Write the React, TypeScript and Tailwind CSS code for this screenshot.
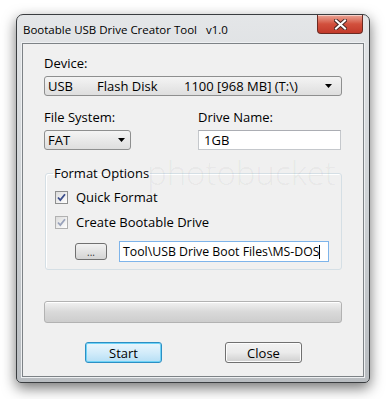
import { useState } from "react"

const font = { fontFamily: '"Open Sans", "Noto Sans", Arial, sans-serif' }

const Arrow = () => (
  <svg width="7" height="4" viewBox="0 0 7 4" className="shrink-0">
    <path d="M0 0h7L3.5 4z" fill="#000" />
  </svg>
)

const Check = ({ checked, disabled }: { checked: boolean; disabled?: boolean }) => (
  <span
    className={
      "flex h-[13px] w-[13px] shrink-0 items-center justify-center border bg-gradient-to-br from-[#dcdcdc] to-white " +
      (disabled ? "border-[#b1b1b1]" : "border-[#8e8f8f]")
    }
  >
    {checked && (
      <svg width="9" height="9" viewBox="0 0 9 9">
        <path
          d="M1 4.5l2.3 2.6L8 1.2"
          fill="none"
          stroke={disabled ? "#9aa3bb" : "#3c4e8c"}
          strokeWidth="1.8"
        />
      </svg>
    )}
  </span>
)

const App = () => {
  const [quick, setQuick] = useState(true)
  const [boot, setBoot] = useState(true)

  return (
    <div className="h-[399px] w-[387px] overflow-hidden bg-white pl-4 pt-[14px]" style={font}>
      <div className="relative flex h-[369px] w-[354px] flex-col rounded-t-[7px] rounded-b-[5px] border border-[#3a3d40] bg-gradient-to-b from-[#e4e6e8] via-[#cfd3d6] to-[#b9bdc1] shadow-[0_5px_14px_rgba(0,0,0,0.55)]">
        {/* title bar */}
        <div className="flex h-[28px] shrink-0 items-start justify-between pl-[6px]">
          <span className="mt-[7px] whitespace-pre text-[11.5px] leading-[16px] text-black">
            Bootable USB Drive Creator Tool   v1.0
          </span>
          <div className="mr-[6px] flex h-[19px] w-[46px] items-center justify-center rounded-b-[4px] border border-t-0 border-[#6b2a22] bg-gradient-to-b from-[#e9a496] via-[#d2503d] to-[#c2392a] shadow-[inset_0_1px_0_rgba(255,255,255,0.5)]">
            <svg width="13" height="11" viewBox="0 0 13 11">
              <path
                d="M2 1.5l9 8M11 1.5l-9 8"
                stroke="#4a2a26"
                strokeWidth="4"
                strokeLinecap="square"
              />
              <path
                d="M2 1.5l9 8M11 1.5l-9 8"
                stroke="#fff"
                strokeWidth="2"
                strokeLinecap="square"
              />
            </svg>
          </div>
        </div>

        {/* client */}
        <div className="mx-[5px] flex h-[334px] flex-col border border-[#7d8286] bg-[#f0f0f0] pl-[21px] pr-[21px] text-[13px] leading-[16px] text-black outline outline-1 outline-[#eef0f2]">
          <div className="pointer-events-none absolute left-[130px] top-[146px] text-[33px] font-light leading-[24px] text-black/[0.05]">
            photobucket
          </div>

          <div className="mt-[11px]">Device:</div>
          <div className="mt-[5px] flex h-[20px] items-center rounded-[3px] border border-[#8e8f8f] bg-gradient-to-b from-[#f4f4f4] to-[#dedede] pl-[3px] pr-[9px]">
            <span className="w-[49px]">USB</span>
            <span className="w-[87px]">Flash Disk</span>
            <span className="flex-1">1100 [968 MB] (T:\)</span>
            <Arrow />
          </div>

          <div className="mt-[13px] flex">
            <div className="flex w-[154px] flex-col">
              <div>File System:</div>
              <div className="mt-[5px] flex h-[20px] w-[87px] items-center justify-between rounded-[3px] border border-[#8e8f8f] bg-gradient-to-b from-[#f4f4f4] to-[#dedede] pl-[3px] pr-[5px]">
                <span>FAT</span>
                <Arrow />
              </div>
            </div>
            <div className="flex flex-1 flex-col">
              <div>Drive Name:</div>
              <div className="mt-[5px] flex h-[20px] w-[143px] items-center border border-[#c5c8cc] border-t-[#abadb3] bg-white pl-[5px]">
                1GB
              </div>
            </div>
          </div>

          <fieldset className="ml-px mt-[15px] w-[297px] rounded-[3px] border border-[#d5dfe5] pb-[7px] pl-[9px] shadow-[inset_1px_1px_0_#fff]">
            <legend className="-ml-[2px] px-[1px]">Format Options</legend>
            <label className="mt-[8px] flex items-center gap-[8px]" onClick={() => setQuick(!quick)}>
              <Check checked={quick} />
              <span>Quick Format</span>
            </label>
            <label className="mt-[9px] flex items-center gap-[8px]" onClick={() => setBoot(!boot)}>
              <Check checked={boot} disabled />
              <span>Create Bootable Drive</span>
            </label>
            <div className="mt-[11px] flex items-center">
              <button className="ml-[20px] h-[17px] w-[32px] rounded-[3px] border border-[#707070] bg-gradient-to-b from-[#f2f2f2] to-[#d4d4d4] text-[10px] leading-[12px] text-[#333]">
                ...
              </button>
              <div className="ml-[12px] flex h-[21px] w-[210px] items-center whitespace-nowrap border border-[#7eb4ea] bg-white pl-[3px] text-[12.3px]">
                Tool\USB Drive Boot Files\MS-DOS
                <span className="h-[14px] w-px shrink-0 bg-black" />
              </div>
            </div>
          </fieldset>

          <div className="mt-[31px] h-[22px] w-[298px] rounded-[3px] border border-[#b2b2b2] bg-gradient-to-b from-[#f2f2f2] via-[#d9d9d9] to-[#cdcdcd] shadow-[inset_0_1px_0_#fff]" />

          <div className="mt-[19px] flex">
            <button className="ml-[41px] h-[21px] w-[77px] rounded-[3px] border border-[#2c8fc4] bg-gradient-to-b from-[#eaf6fd] via-[#d3ecfa] to-[#b6dff5] shadow-[inset_0_0_0_1px_#6fd3f7] text-[13px] leading-[16px]">
              Start
            </button>
            <button className="ml-[63px] h-[21px] w-[77px] rounded-[3px] border border-[#707070] bg-gradient-to-b from-[#f2f2f2] via-[#ebebeb] to-[#cfcfcf] shadow-[inset_0_0_0_1px_#fcfcfc] text-[13px] leading-[16px]">
              Close
            </button>
          </div>
        </div>
      </div>
    </div>
  )
}

export default App
